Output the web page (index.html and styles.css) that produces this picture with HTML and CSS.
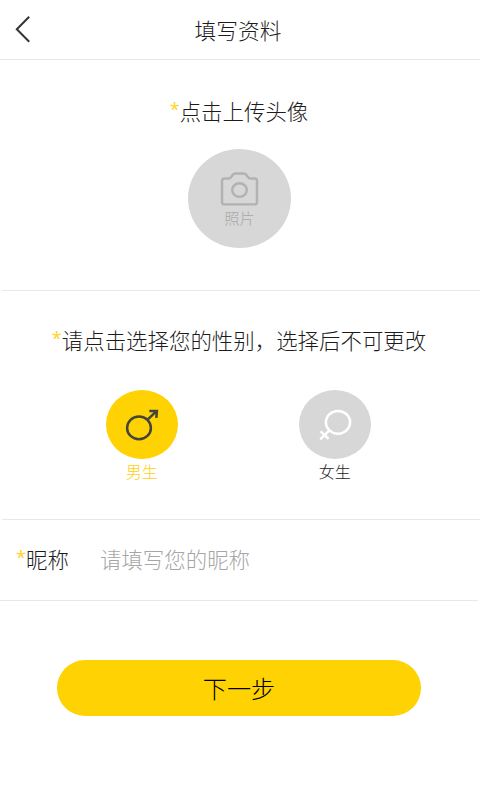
FILE: index.html
```html
<!DOCTYPE html>
<html lang="zh-CN">
<head>
<meta charset="utf-8">
<title>填写资料</title>
<link rel="stylesheet" href="styles.css">
</head>
<body>
<header class="header">
  <svg class="back" width="18" height="28" viewBox="0 0 18 28"><path d="M15.2 1.8 2.8 14.2 15.2 26.8"/></svg>
  <h1 class="title">填写资料</h1>
</header>
<main>
  <section class="section avatar-section">
    <h2 class="heading"><span class="star">*</span>点击上传头像</h2>
    <div class="avatar">
      <svg class="camera" width="39" height="35" viewBox="0 0 40 36"><path d="M4.5 7.7H8.6Q10.3 7.7 11.4 6.2L12.9 4.1Q14 2.5 15.8 2.5H24.2Q26 2.5 27.1 4.1L28.6 6.2Q29.7 7.7 31.4 7.7H35.5Q38 7.7 38 10.2V31.8Q38 34.3 35.5 34.3H4.5Q2 34.3 2 31.8V10.2Q2 7.7 4.5 7.7Z"/><ellipse cx="20" cy="19.6" rx="7.5" ry="7"/></svg>
      <span class="photo">照片</span>
    </div>
  </section>
  <section class="section gender-section">
    <h2 class="heading"><span class="star">*</span>请点击选择您的性别，选择后不可更改</h2>
    <div class="genders">
      <div class="gender selected">
        <div class="disc"><svg width="72" height="70" viewBox="0 0 72 70"><ellipse cx="33" cy="37.9" rx="11.9" ry="11.4"/><path d="M41.3 29.8 50.8 20.9M43.3 21H50.9L50.3 27.8"/></svg></div>
        <span class="name">男生</span>
      </div>
      <div class="gender">
        <div class="disc"><svg width="72" height="70" viewBox="0 0 72 70"><ellipse cx="39" cy="32.3" rx="12.1" ry="11.4"/><path d="M30.4 40.4 21.2 49.3M21.6 41.4 29.6 48.8"/></svg></div>
        <span class="name">女生</span>
      </div>
    </div>
  </section>
  <section class="section field">
    <span class="label"><span class="star">*</span>昵称</span>
    <span class="hint">请填写您的昵称</span>
  </section>
  <button class="next" type="button">下一步</button>
</main>
</body>
</html>
```

FILE: styles.css
```css
* { box-sizing: border-box; }
body {
  margin: 0;
  height: 800px;
  background: #fff;
  color: #1c1c1c;
  font-family: "Noto Sans CJK SC", sans-serif;
  font-weight: 300;
}
svg {
  display: block;
  fill: none;
}
.header {
  display: grid;
  grid-template-columns: 40px 1fr 44px;
  align-items: center;
  height: 60px;
  border-bottom: 1px solid #e8e8e8;
}
.back {
  margin: -2px 0 0 14px;
  stroke: #333;
  stroke-width: 2;
}
.title {
  margin: 0;
  font-size: 21.7px;
  line-height: 32px;
  font-weight: 300;
  text-align: center;
}
.section { border-bottom: 1px solid #e8e8e8; }
.heading {
  margin: 0;
  font-size: 21.45px;
  line-height: 32px;
  font-weight: 300;
  text-align: center;
}
.star {
  display: inline-block;
  width: 10px;
  color: #ffd42a;
  font-family: "Open Sans", "Noto Sans", sans-serif;
  font-size: 18px;
  line-height: 18px;
  font-weight: 400;
  vertical-align: 4px;
}
.avatar-section {
  height: 231px;
  margin-left: 2px;
  padding: 35px 4px 0 0;
}
.avatar {
  display: flex;
  flex-direction: column;
  align-items: center;
  width: 103px;
  height: 99px;
  margin: 22px 0 0 186px;
  padding-top: 22px;
  border-radius: 50%;
  background: #d7d7d7;
}
.camera {
  stroke: #b2b2b2;
  stroke-width: 2.5;
}
.photo {
  font-size: 15.3px;
  line-height: 22px;
  color: #a9a9a9;
}
.gender-section {
  height: 229px;
  margin-left: 2px;
  padding-top: 33px;
}
.gender-section .heading { padding-right: 4px; }
.genders {
  display: flex;
  gap: 121.5px;
  margin: 34px 0 0 104px;
}
.gender {
  display: flex;
  flex-direction: column;
  align-items: center;
  width: 71.5px;
}
.disc {
  width: 71.5px;
  height: 69px;
  border-radius: 50%;
  background: #d7d7d7;
}
.disc svg {
  stroke: #fff;
  stroke-width: 2.5;
}
.name {
  font-size: 16px;
  line-height: 24px;
}
.selected .disc { background: #ffd204; }
.selected .disc svg { stroke: #45443a; }
.selected .name { color: #ffcf10; }
.field {
  display: flex;
  align-items: center;
  height: 81px;
  margin-right: 2px;
  padding: 0 0 2px 16px;
  font-size: 21.45px;
  line-height: 32px;
}
.label { width: 84px; }
.hint { color: #a6a6a6; }
.next {
  display: block;
  width: 364px;
  height: 55.5px;
  margin: 59px 0 0 57px;
  padding: 0;
  border: 0;
  border-radius: 28px;
  background: #ffd204;
  color: #000;
  font-family: inherit;
  font-size: 24.2px;
  font-weight: 300;
  line-height: 54px;
}
```
